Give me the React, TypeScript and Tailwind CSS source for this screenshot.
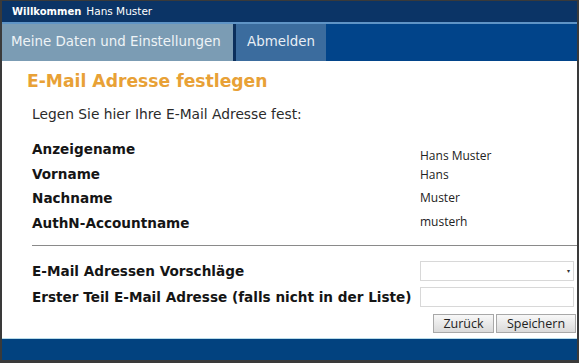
export default function App() {
  const info = [
    ["Anzeigename", "Hans Muster", "mt-[7px]"],
    ["Vorname", "Hans", "mt-[1px]"],
    ["Nachname", "Muster", "mt-0"],
    ["AuthN-Accountname", "musterh", "-mt-[1px]"],
  ];

  return (
    <div className="w-[579px] h-[363px] bg-white">
      <div className="w-[579px] h-[363px] flex flex-col border-l-2 border-r-2 border-b-[3px] border-t border-[#3a3a3a] bg-white font-['DejaVu_Sans',Verdana,sans-serif]">
        <div className="h-[21px] shrink-0 bg-[#0b3466] flex items-center pl-[10px] text-[10px] text-white">
          <span className="font-bold">Willkommen</span>
          <span className="ml-[5px] text-[10.5px]">Hans Muster</span>
        </div>
        <div className="h-[2px] shrink-0 bg-[#5f94c6]" />
        <div className="h-[37px] shrink-0 bg-[#01448a] flex">
          <div className="w-[231px] bg-[#7b9cb4] flex items-center pl-[9px] text-[13.4px] text-[#eef3f6]">
            Meine Daten und Einstellungen
          </div>
          <div className="w-[3px] bg-[#0b2f5c]" />
          <div className="w-[90px] bg-[#3b6c9e] flex items-center pl-[11px] text-[13.4px] text-[#e9eff5]">
            Abmelden
          </div>
        </div>

        <div className="h-[277px] shrink-0 overflow-hidden">
          <div className="pl-[25px] pt-[9px] text-[17.2px] font-bold text-[#e8a136] leading-[22px]">
            E-Mail Adresse festlegen
          </div>
          <div className="pl-[30px] mt-[14px] text-[13.8px] text-[#2b2b2b] leading-[16px]">
            Legen Sie hier Ihre E-Mail Adresse fest:
          </div>

          <div className="pl-[30px] mt-[18px]">
            {info.map(([label, value, off]) => (
              <div key={label} className="h-[24.6px] flex">
                <div className="w-[388px] text-[13.6px] font-bold text-[#151515] leading-[18px]">{label}</div>
                <div className={`${off} text-[12px] text-[#222] leading-[18px] font-['Open_Sans',sans-serif]`}>{value}</div>
              </div>
            ))}
          </div>

          <div className="ml-[30px] mt-[7px] h-px bg-[#8a8a8a]" />

          <div className="pl-[30px] pt-[15px] grid grid-cols-[388px_154px] gap-y-[6px] items-center">
            <div className="text-[13.6px] font-bold text-[#151515] leading-[18px]">E-Mail Adressen Vorschläge</div>
            <div className="h-[20px] border border-[#d8d8d8] flex items-center justify-end pr-[3px]">
              <span className="text-[6px] leading-none text-[#333]">▾</span>
            </div>
            <div className="text-[13.6px] font-bold text-[#151515] leading-[18px] whitespace-nowrap">
              Erster Teil E-Mail Adresse (falls nicht in der Liste)
            </div>
            <div className="h-[20px] border border-[#d8d8d8]" />
          </div>

          <div className="h-[19px] mt-[7px] flex justify-end gap-[2px] pr-[1px] font-['Open_Sans',sans-serif]">
            <div className="w-[61px] h-[19px] border border-[#a8a8a8] bg-[linear-gradient(#f8f8f8,#dadada)] text-[12.5px] text-[#222] leading-[17px] text-center">
              Zurück
            </div>
            <div className="w-[80px] h-[19px] border border-[#a8a8a8] bg-[linear-gradient(#f8f8f8,#dadada)] text-[12.5px] text-[#222] leading-[17px] text-center">
              Speichern
            </div>
          </div>
        </div>

        <div className="h-px shrink-0 bg-[#b8dcea]" />
        <div className="flex-1 bg-[#02427f]" />
      </div>
    </div>
  );
}
